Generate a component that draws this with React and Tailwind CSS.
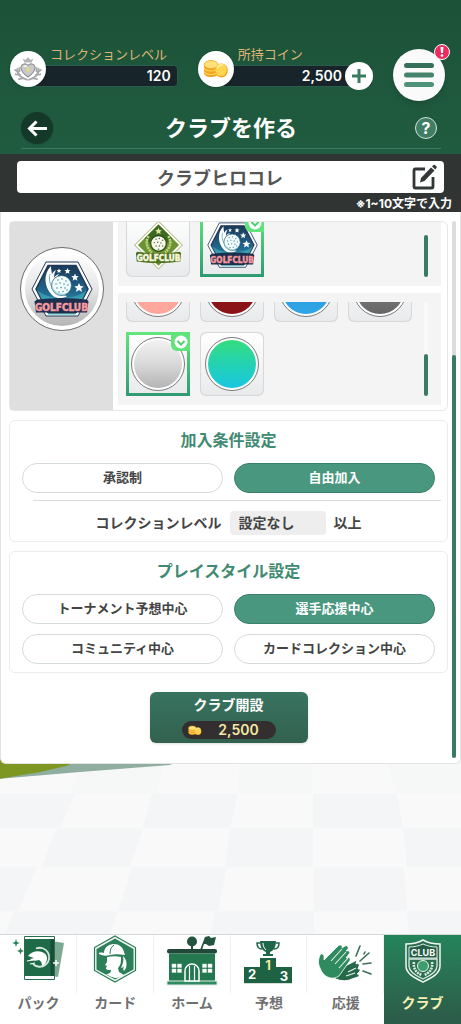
import React, { useState } from 'react';

const EMBLEMS = ['diamond', 'hexagon'];

const COLORS = [
    { name: 'ピンク', fill: 'bg-[#ffa79c]' },
    { name: 'レッド', fill: 'bg-[#8b1216]' },
    { name: 'ブルー', fill: 'bg-linear-to-b from-[#2f8fe0] to-[#2ea6e4]' },
    { name: 'グレー', fill: 'bg-linear-to-b from-[#8a8a8a] to-[#666666]' },
    { name: 'シルバー', fill: 'bg-linear-to-b from-[#f2f2f2] via-[#d9d9d9] to-[#b4b4b4]' },
    { name: 'エメラルド', fill: 'bg-linear-to-b from-[#35dc7c] to-[#1bc6e0]' },
];

const JOIN_TYPES = ['承認制', '自由加入'];
const PLAY_STYLES = ['トーナメント予想中心', '選手応援中心', 'コミュニティ中心', 'カードコレクション中心'];

const Coins = ({ className }) => (
    <svg viewBox="0 0 26 20" className={className} aria-hidden="true">
        <path d="M1 6v8c0 2.500 3 4 7 4s7-1.500 7-4V6z" fill="#f2a51d" />
        <path d="M1 9c1 2 3.500 3 7 3s6-1 7-3M1 12.500c1 2 3.500 3 7 3s6-1 7-3" fill="none" stroke="#ffd964" strokeWidth="1.200" />
        <ellipse cx="8" cy="5.500" rx="7" ry="4" fill="#ffe07a" stroke="#f0a828" strokeWidth=".8" />
        <ellipse cx="18.500" cy="11.500" rx="6.300" ry="7" fill="#f3a41e" />
        <ellipse cx="18" cy="10.800" rx="5.800" ry="6.300" fill="#ffd451" />
        <path d="M14.500 9c1-2.500 3-3.500 5-3" fill="none" stroke="#fff3b8" strokeWidth="1.300" strokeLinecap="round" />
    </svg>
);

const LevelCrest = () => (
    <svg viewBox="0 0 30 30" className="size-8" aria-hidden="true">
        <g fill="none" stroke="#a9a9ad" strokeWidth="1.800" strokeLinecap="round">
            <path d="M5 15c0 5 3 8.500 9 10M25 15c0 5-3 8.500-9 10" />
            <path d="M3 16l3 2M3.500 20l4 .5M6.500 24.500l4-1M27 16l-3 2M26.500 20l-4 .5M23.500 24.500l-4-1M7 14v3M23 14v3" />
        </g>
        <path d="M10 5l2.500 1.500L15 4l2.500 2.500L20 5l-1.500 4h-7z" fill="#b3b3b8" />
        <path d="M15 22.500c-5-3.500-7-6.500-6.500-9.500.5-3 4.500-3.800 6.500-1.300 2-2.500 6-1.700 6.500 1.300.5 3-1.500 6-6.500 9.500z" fill="#c9c9cd" stroke="#8f8f95" strokeWidth="1" />
        <path d="M11 13c.8-1.300 2-1.300 3-.3" stroke="#fff" strokeWidth="1.200" fill="none" />
        <path d="M15 12.500l1.300 3.500-1.300 3-1.300-3z" fill="#ece05e" />
    </svg>
);

const HexagonEmblem = ({ className }) => (
    <svg viewBox="0 0 62 57" className={className} aria-hidden="true">
        <defs>
            <linearGradient id="hexSky" x1="0" y1="0" x2="0" y2="1">
                <stop offset="0" stopColor="#1b3858" />
                <stop offset=".6" stopColor="#216a90" />
                <stop offset="1" stopColor="#4fb9c2" />
            </linearGradient>
        </defs>
        <path d="M15 1h32l14 27-14 27H15L1 28z" fill="#fff" stroke="#22395a" strokeWidth="1" />
        <path d="M17 4.500h28L57 28 45 51H17L5 28z" fill="url(#hexSky)" stroke="#22395a" strokeWidth="1.500" />
        <path d="M6 29c6 5 14 8 25 8s19-3 25-8l-7 14H13z" fill="#43b3bd" opacity=".6" />
        <path d="M20 5c-8 8-7 21 1 29 4 4 11 4 15 1-9-1-12-8-11-15 .5-3 1.500-5 3-7-2 .5-4 2-5 4 0-3 .5-5 2-8-2 1-3 2-4 4-.5-3-1-5-1-8z" fill="#fff" />
        <path d="M19 13c-2 7 1 13 6 18" fill="none" stroke="#5ba5bd" strokeWidth=".9" />
        <circle cx="30.500" cy="24.500" r="10" fill="#f3fbfb" stroke="#1f5878" strokeWidth=".8" />
        <path d="M21.500 20a10 10 0 0017 9.500 10 10 0 01-11 4 10 10 0 01-6-13.500z" fill="#7fcbd2" opacity=".7" />
        <g fill="#3d98ae">
            <circle cx="27" cy="19" r=".8" /><circle cx="31" cy="18" r=".8" /><circle cx="35" cy="20" r=".8" />
            <circle cx="25" cy="23" r=".8" /><circle cx="29" cy="22" r=".8" /><circle cx="33" cy="23" r=".8" /><circle cx="37" cy="24" r=".8" />
            <circle cx="26" cy="27" r=".8" /><circle cx="30" cy="26.500" r=".8" /><circle cx="34" cy="27" r=".8" />
            <circle cx="28" cy="31" r=".8" /><circle cx="32" cy="30.500" r=".8" /><circle cx="36" cy="29" r=".8" />
        </g>
        <g fill="#fff">
            <path d="M28 7.500l.7 1.600 1.700.1-1.300 1.100.4 1.700-1.500-.9-1.500.9.4-1.700-1.300-1.100 1.700-.1z" />
            <path d="M36.500 7l.9 2 2.200.2-1.700 1.400.5 2.200-1.900-1.100-1.900 1.100.5-2.200-1.700-1.400 2.200-.2z" />
            <path d="M44 12.500l1.100 2.500 2.700.2-2.100 1.800.7 2.700-2.400-1.500-2.400 1.500.7-2.700-2.100-1.800 2.700-.2z" />
            <path d="M48 22l1.400 3.100 3.300.3-2.500 2.200.8 3.300-3-1.800-3 1.800.8-3.300-2.500-2.200 3.300-.3z" />
        </g>
        <path d="M6 38.500q25-3 50 0l1.500 2-1.500 11h-10l-2 2H18l-2-2H5l-1.500-11z" fill="#1d2f4f" />
        <path d="M17 52.500h28l-1 1.500H18z" fill="#8fe0d4" />
        <text
            x="30.500"
            y="49.500"
            textAnchor="middle"
            fill="#f79a9f"
            stroke="#f79a9f"
            strokeWidth=".5"
            className="font-['DejaVu_Sans_Condensed','Liberation_Sans',sans-serif] text-[10px] font-bold"
        >
            GOLFCLUB
        </text>
    </svg>
);

const DiamondEmblem = ({ className }) => (
    <svg viewBox="0 0 62 57" className={className} aria-hidden="true">
        <path d="M31-1L60 28 31 57 2 28z" fill="#fff" stroke="#8ba53c" strokeWidth="1" />
        <path d="M31 3l25 25-25 25L6 28z" fill="#6b9430" />
        <path d="M31 3l17 17c-3 2-5 3-6 6l-11-9-11 9c-1-3-3-4-6-6z" fill="#3d6a1f" />
        <path d="M31 7l1.200 2.700 2.900.2-2.200 1.900.7 2.900-2.600-1.600-2.600 1.600.7-2.900-2.200-1.900 2.900-.2z" fill="#dbe9a4" />
        <g fill="none" stroke="#c3d685" strokeWidth="3" strokeDasharray="2.500 1">
            <path d="M19 17c-4 7-3 14 4 20M43 17c4 7 3 14-4 20" />
        </g>
        <circle cx="31" cy="26" r="9.500" fill="#f6f8ea" stroke="#2b4a17" strokeWidth="1.500" />
        <path d="M23 22a9 9 0 0015 9.500 9 9 0 01-9 2.500 9 9 0 01-6-12z" fill="#9cab86" />
        <g fill="#566b45">
            <circle cx="28" cy="21" r=".9" /><circle cx="32" cy="20" r=".9" /><circle cx="36" cy="22" r=".9" />
            <circle cx="26" cy="25" r=".9" /><circle cx="30" cy="24.500" r=".9" /><circle cx="34" cy="25.500" r=".9" />
            <circle cx="28" cy="29" r=".9" /><circle cx="32" cy="29" r=".9" /><circle cx="36" cy="29" r=".9" />
            <circle cx="31" cy="33" r=".9" />
        </g>
        <path d="M5 36q26 4 52 0l1.500 2-1 10q-27 4-53 0l-1-10z" fill="#4f7420" />
        <text
            x="31"
            y="47"
            textAnchor="middle"
            fill="#fbfbe0"
            stroke="#fbfbe0"
            strokeWidth=".5"
            className="font-['DejaVu_Sans_Condensed','Liberation_Sans',sans-serif] text-[10px] font-bold"
        >
            GOLFCLUB
        </text>
    </svg>
);

const EditIcon = () => (
    <svg viewBox="0 0 26 26" className="size-[26px]" aria-hidden="true">
        <path d="M14 5H4.500A1.500 1.500 0 003 6.500v16A1.500 1.500 0 004.500 24h16a1.500 1.500 0 001.500-1.500V13" fill="none" stroke="#333737" strokeWidth="2.800" />
        <path d="M9 18.500l1-4.500L20 3.500l3.500 3L13.500 17z" fill="#333737" />
        <path d="M21 2.500l1.500-1.500a1 1 0 011.400 0l1.600 1.500a1 1 0 010 1.400L24.300 5.500z" fill="#333737" />
    </svg>
);

const PackIcon = () => (
    <svg viewBox="0 0 52 50" className="h-[50px] w-[52px]" aria-hidden="true">
        <path d="M40 6l12 2-6 34-10-2z" fill="#7fa892" />
        <path d="M12.500 1.500h30v43h-30z" fill="#fff" stroke="#2a6e50" strokeWidth="1" />
        <path d="M13 4h29v37H13z" fill="#1f6a47" />
        <path d="M38.500 4H42v37h-3.500z" fill="#174f36" />
        <path d="M24 13.500a9.500 9.500 0 11-3 15.500" fill="none" stroke="#d5e8dc" strokeWidth="1.800" />
        <path d="M16 21c3-4 9-6 14-4 3 1 5 3 5 6 0 4-2 7-5 8 0-3-1-5-3-6-3 1-8 1-9-1l4-1c-2-1-4-1-6-2z" fill="#fff" />
        <path d="M15 26l6-1M18 29l5-1" stroke="#fff" strokeWidth="1.200" />
        <path d="M44 25v6M41 28h6" stroke="#fff" strokeWidth="1.500" />
        <path d="M4 4l1 3 3 1-3 1-1 3-1-3-3-1 3-1zM8.500 12.500l1 2.500 2.500 1-2.500 1-1 2.500-1-2.500-2.500-1 2.500-1z" fill="#2a8058" />
    </svg>
);

const CardIcon = () => (
    <svg viewBox="0 0 52 50" className="h-[50px] w-[52px]" aria-hidden="true">
        <path d="M26 1l20.500 11.500v23L26 47 5.500 35.500v-23z" fill="#f3f7f4" stroke="#2a7a56" strokeWidth="1.200" />
        <path d="M26 3.500l18.500 10.500v20.500L26 44.500 7.500 34.500V14z" fill="#2c7f59" />
        <path d="M15 18c0-5 4-9 10-9 5 0 9 3 10 8l1 3c-6-1-11-1-15 0-4 1-7 1-11-1-1-1 1-2 5-1z" fill="#fff" />
        <path d="M18 22c5-1 10-1 14 0 0 5 0 8-3 11l1 4 5 3c-3 2-6 3-9 3-3-1-6-2-9-4 3 0 5-1 5-4-3 0-5 0-5-2l1-2-2-1 2-3z" fill="#fff" />
        <path d="M34 21c4 4 4 8 3 12l-2 3c-1-1-1-3 0-5-1 1-2 2-3 2 2-4 3-8 2-12z" fill="#fff" />
        <path d="M25 10c-3 2-4 5-4 9" fill="none" stroke="#2c7f59" strokeWidth="1" />
    </svg>
);

const HomeIcon = () => (
    <svg viewBox="0 0 52 52" className="h-[52px] w-[52px]" aria-hidden="true">
        <circle cx="26" cy="6.500" r="5" fill="#22543f" />
        <path d="M25 11h2v5h-2z" fill="#22543f" />
        <path d="M34 15l5-13 4-1 2 2 5-1-2 8-5 1-3-2-2 0-2 6z" fill="#22543f" />
        <rect x="1" y="14" width="50" height="4.500" rx="2" fill="#22483a" />
        <path d="M3 18.500h46V46H3z" fill="#23784f" />
        <path d="M1 46h50v4H1z" fill="#2f8a61" stroke="#dfeae4" strokeWidth="1" />
        <path d="M19 46V36a7 7 0 0114 0v10z" fill="#23784f" stroke="#fff" strokeWidth="1.500" />
        <path d="M23.500 46V31M28.500 46V31" stroke="#fff" strokeWidth="1.200" />
        <g fill="#fff" stroke="#d5e6dc" strokeWidth=".5">
            <path d="M6 29h4v3.500H6zM11.500 29h4v3.500h-4zM6 34h4v3.500H6zM11.500 34h4v3.500h-4z" />
            <path d="M36.500 29h4v3.500h-4zM42 29h4v3.500h-4zM36.500 34h4v3.500h-4zM42 34h4v3.500h-4z" />
        </g>
    </svg>
);

const PodiumIcon = () => (
    <svg viewBox="0 0 52 50" className="h-[50px] w-[52px]" aria-hidden="true">
        <path d="M18 6h16c0 7-3 10-6 11v2h3v2H21v-2h3v-2c-3-1-6-4-6-11z" fill="#20664a" />
        <path d="M18 8h-3c0 4 2 6 5 6M34 8h3c0 4-2 6-5 6" fill="none" stroke="#20664a" strokeWidth="1.500" />
        <path d="M21 8c0 3 1 5 3 7" fill="none" stroke="#fff" strokeWidth="1" />
        <path d="M2 33h16v-9h16v9h16v16H2z" fill="#d9ddda" />
        <path d="M2 32h16v-9h16v9h16v16H2z" fill="#1e6244" />
        <g textAnchor="middle" className="font-[Inter,sans-serif] text-[13px] font-bold">
            <text x="26" y="35" fill="#f1e9a0">1</text>
            <text x="10" y="44" fill="#fff">2</text>
            <text x="42" y="46" fill="#fff">3</text>
        </g>
    </svg>
);

const ClapIcon = () => (
    <svg viewBox="0 0 54 50" className="h-[50px] w-[54px]" aria-hidden="true">
        <path d="M14 42c6 4 14 5 20 2l6-2c2-1 1-3-1-3l2-2c2-1 1-4-1-3l1-3c1-2-1-3-3-2l1-4-12 6z" fill="#27684b" stroke="#fff" strokeWidth="1" />
        <path d="M2 33c-2-4-2-8 0-13 1-2 4-1 4 1v4L20 11c2-2 5-1 4 2l3-2c2-1 4 1 3 3l-2 2c3-1 5 1 3 3l-3 4c3-2 6 1 3 4L21 41c-7 5-16 1-19-8z" fill="#2f8a5f" stroke="#fff" strokeWidth=".8" />
        <path d="M13 26l11-12M17 29l11-12M21 33l9-10M28 41l9-3M30 37l8-4" stroke="#e6f2ea" strokeWidth="1.100" />
        <g stroke="#3a6f58" strokeWidth="1.600" strokeLinecap="round">
            <path d="M38 21l4-10M42 26l9-8M45 29l8-1M45 36l8 3M46 19l1-2" />
        </g>
    </svg>
);

const ClubIcon = () => (
    <svg viewBox="0 0 52 50" className="h-[50px] w-[52px]" aria-hidden="true">
        <path d="M26 5c5 3 11 4 17 4v22c0 8-9 12-17 16-8-4-17-8-17-16V9c6 0 12-1 17-4z" fill="#2b6f50" stroke="#f4f8f5" strokeWidth="1.500" />
        <path d="M12 24h28v7c0 6-7 10-14 13-7-3-14-7-14-13z" fill="none" stroke="#dcebe2" strokeWidth="1.300" />
        <path d="M12 12c5 0 10-1 14-3 4 2 9 3 14 3v11H12z" fill="#235d44" stroke="#dcebe2" strokeWidth="1" />
        <text x="26" y="21" textAnchor="middle" fill="#fff" className="font-[Inter,sans-serif] text-[9px] font-bold">CLUB</text>
        <circle cx="26" cy="31" r="5.500" fill="#3f9c6e" stroke="#e8f3ec" strokeWidth="1" />
        <path d="M17 27c-1 6 2 11 8 13M35 27c1 6-2 11-8 13" fill="none" stroke="#dcebe2" strokeWidth="2.600" strokeDasharray="2 .8" />
    </svg>
);

const NAV_ITEMS = [
    { label: 'パック', Icon: PackIcon },
    { label: 'カード', Icon: CardIcon },
    { label: 'ホーム', Icon: HomeIcon },
    { label: '予想', Icon: PodiumIcon },
    { label: '応援', Icon: ClapIcon },
    { label: 'クラブ', Icon: ClubIcon, active: true },
];

const Tile = ({ label, selected, onClick, children }) => (
    <button
        type="button"
        aria-label={label}
        aria-pressed={selected}
        onClick={onClick}
        className={`relative size-16 shrink-0 ${selected ? 'bg-linear-to-b from-[#62e67c] to-[#2f9a72] p-[3px]' : 'rounded-md bg-[#d6d8da] p-px'}`}
    >
        <span className={`flex size-full items-center justify-center bg-linear-to-b from-white to-[#e8eaec] ${selected ? '' : 'rounded-md'}`}>
            {children}
        </span>
        {selected && (
            <span className="absolute top-0 right-0 flex size-[19px] items-center justify-center rounded-bl-md bg-[#5fe37a]">
                <svg viewBox="0 0 14 14" className="size-[14px]" aria-hidden="true">
                    <circle cx="7" cy="7" r="6.500" fill="#fff" />
                    <path d="M3.500 6L7 9.500 10.500 6" fill="none" stroke="#4fcf72" strokeWidth="2" />
                </svg>
            </span>
        )}
    </button>
);

const Pill = ({ label, selected, onClick }) => (
    <button
        type="button"
        aria-pressed={selected}
        onClick={onClick}
        className={`h-[30px] rounded-full border text-[13px] font-bold ${selected ? 'border-[#3b8069] bg-[#4a9780] text-white' : 'border-[#d5dadb] bg-white text-[#444444]'}`}
    >
        {label}
    </button>
);

const Card = ({ title, children }) => (
    <section className="rounded-md border border-[#ececec] bg-white pt-[7px]">
        <h2 className="text-center text-base leading-6 font-bold text-[#418a72]">{title}</h2>
        {children}
    </section>
);

const Floor = () => (
    <svg viewBox="0 -8 461 179" preserveAspectRatio="none" className="absolute inset-0 size-full" aria-hidden="true">
        <path d="M0-8h461v179H0z" fill="#f9f9f9" />
        <g fill="#f3f5f6">
            <path d="M85-8h80l-8 38H70zM240-8h72v38h-74zM385-8h76v38h-64z" fill="#f6f7f7" />
            <path d="M0 30h75L60 65H0zM152 30h86l-8 35h-87zM313 30h84l6 35h-90z" />
            <path d="M56 65h87l-13 39H42zM230 65h83v39h-88zM403 65h58v39h-54z" />
            <path d="M0 104h37l-19 44H0zM132 104h95l-9 44H118zM314 104h90l3 44h-93z" />
            <path d="M14 148h104l-8 23H5zM215 148h99v23H211zM407 148h54v23h-52z" />
        </g>
        <path d="M0-8h190L170 1 80 8 0 15z" fill="#8fae9f" />
        <path d="M0-8h90L66 2 40 8 0 15z" fill="#7d9722" />
    </svg>
);

const App = () => {
    const [clubName, setClubName] = useState('クラブヒロコレ');
    const [emblem, setEmblem] = useState('hexagon');
    const [color, setColor] = useState('シルバー');
    const [joinType, setJoinType] = useState('自由加入');
    const [playStyle, setPlayStyle] = useState('選手応援中心');

    return (
        <div className="flex min-h-screen flex-col bg-[#f7f7f7] font-[Inter,'Noto_Sans_CJK_JP',sans-serif] text-[#444444]">
            <header className="bg-linear-to-b from-[#1c5238] to-[#205c40] pt-[45px] pb-[5px]">
                <div className="flex items-start gap-5 pr-4 pl-[10px]">
                    <div className="flex flex-[22] items-end">
                        <div className="z-10 flex size-9 shrink-0 items-center justify-center rounded-full bg-white shadow">
                            <LevelCrest />
                        </div>
                        <div className="-ml-4 flex-1">
                            <p className="pl-5 text-[13px] leading-[18px] whitespace-nowrap text-[#dfb374]">コレクションレベル</p>
                            <p className="mt-[2px] rounded-sm border border-[#2c5a48] bg-[#17252a] pr-[6px] text-right text-sm leading-5 font-semibold text-white">120</p>
                        </div>
                    </div>
                    <div className="flex flex-[23] items-end">
                        <div className="z-10 flex size-9 shrink-0 items-center justify-center rounded-full bg-white shadow">
                            <Coins className="h-5 w-[26px]" />
                        </div>
                        <div className="-ml-4 flex-1">
                            <p className="pl-5 text-[13px] leading-[18px] whitespace-nowrap text-[#dfb374]">所持コイン</p>
                            <p className="mt-[2px] rounded-sm border border-[#2c5a48] bg-[#17252a] pr-[30px] text-right text-sm leading-5 font-semibold text-white">2,500</p>
                        </div>
                        <button type="button" aria-label="コイン追加" className="-mb-[3px] -ml-7 flex size-7 items-center justify-center rounded-full bg-white">
                            <svg viewBox="0 0 28 28" className="size-7" aria-hidden="true">
                                <path d="M14 7v14M7 14h14" stroke="#3c7a62" strokeWidth="3" />
                            </svg>
                        </button>
                    </div>
                    <button type="button" aria-label="メニュー" className="relative mt-1 flex size-[52px] shrink-0 items-center justify-center rounded-full bg-[#fafafa] shadow-md">
                        <svg viewBox="0 0 30 26" className="h-[26px] w-[30px]" aria-hidden="true">
                            <rect x="0" y="1" width="30" height="5" rx="2.500" fill="#37705a" />
                            <rect x="0" y="10.500" width="30" height="5" rx="2.500" fill="#45836b" />
                            <rect x="0" y="20" width="30" height="5" rx="2.500" fill="#4d9279" />
                        </svg>
                        <span className="absolute -top-[5px] -right-[5px] flex size-4 items-center justify-center rounded-full border border-white bg-[#ea2c60]">
                            <svg viewBox="0 0 4 10" className="h-[10px] w-1" aria-hidden="true">
                                <path d="M.5 0h3L3 6H1z" fill="#fff" />
                                <circle cx="2" cy="8.500" r="1.300" fill="#fff" />
                            </svg>
                        </span>
                    </button>
                </div>
                <div className="mr-5 ml-[21px] border-b border-[#3b7a5f] pb-1">
                    <div className="mt-[11px] grid h-8 grid-cols-[1fr_auto_1fr] items-center">
                        <button type="button" aria-label="戻る" className="flex size-8 items-center justify-center rounded-full bg-[#14382a] shadow">
                            <svg viewBox="0 0 32 32" className="size-8" aria-hidden="true">
                                <path d="M26 16.500H9M15.500 9.500L8.500 16.500l7 7" fill="none" stroke="#fff" strokeWidth="3" />
                            </svg>
                        </button>
                        <h1 className="text-[22px] leading-8 font-bold text-white">クラブを作る</h1>
                        <button type="button" className="mr-1 flex size-[22px] items-center justify-center justify-self-end rounded-full border border-[#d5e4dc] bg-[#3f7d65] text-base leading-none font-bold text-white">
                            ?
                        </button>
                    </div>
                </div>
            </header>

            <div className="bg-[#303433] pt-[7px]">
                <div className="mx-[17px] flex h-8 items-center rounded-sm bg-white pr-[7px] pl-3">
                    <input
                        id="club-name"
                        type="text"
                        maxLength={10}
                        aria-label="クラブ名"
                        value={clubName}
                        onChange={(e) => setClubName(e.target.value)}
                        className="h-8 min-w-0 flex-1 text-center text-lg font-bold text-[#555555] outline-none"
                    />
                    <label htmlFor="club-name">
                        <EditIcon />
                    </label>
                </div>
                <p className="pt-[3px] pr-[9px] text-right text-xs leading-4 font-bold text-white">※1~10文字で入力</p>
            </div>

            <main className="relative z-10 flex rounded-b-md border-x border-b border-[#e3e3e3] bg-white pt-[9px] pr-1 pb-[5px] pl-2">
                <div className="flex min-w-0 flex-1 flex-col gap-[9px] pb-[15px]">
                    <section className="flex rounded-md border border-[#e6e6e6]">
                        <div className="flex w-[103px] shrink-0 justify-center bg-[#dfdfdf] pt-[25px]">
                            <div className="flex size-[84px] items-center justify-center rounded-full border border-[#6e6e6e] bg-white p-1">
                                <div className="flex size-full items-center justify-center rounded-full bg-linear-to-b from-white via-[#e6e6e6] to-[#b5b5b5]">
                                    <HexagonEmblem className="h-[57px] w-[62px] shrink-0" />
                                </div>
                            </div>
                        </div>
                        <div className="flex min-w-0 flex-1 flex-col gap-[7px] pr-[6px] pb-[5px] pl-[5px]">
                            <div className="flex h-16 justify-between overflow-hidden bg-[#f4f4f4] pr-[13px] pb-[9px] pl-2">
                                <div className="flex items-end gap-[10px]">
                                    {EMBLEMS.map((name) => (
                                        <Tile key={name} label={name} selected={emblem === name} onClick={() => setEmblem(name)}>
                                            {name === 'hexagon' ? <HexagonEmblem className="h-[47px] w-[51px]" /> : <DiamondEmblem className="h-[47px] w-[51px] overflow-visible" />}
                                        </Tile>
                                    ))}
                                </div>
                                <div className="h-[42px] w-1 self-end rounded-full bg-[#3b7a62]" />
                            </div>
                            <div className="bg-[#f4f4f4] py-[9px] pr-[13px] pl-2">
                                <div className="flex h-[94px] justify-between overflow-hidden">
                                    <div className="grid grid-cols-4 content-end gap-[10px]">
                                        {COLORS.map((c) => (
                                            <Tile key={c.name} label={c.name} selected={color === c.name} onClick={() => setColor(c.name)}>
                                                <span className="flex size-[54px] shrink-0 rounded-full border border-[#7b7b7b] bg-white p-[2px]">
                                                    <span className={`size-full rounded-full ${c.fill}`} />
                                                </span>
                                            </Tile>
                                        ))}
                                    </div>
                                    <div className="flex w-1 flex-col justify-end rounded-full bg-[#fafafa]">
                                        <div className="h-[42px] rounded-full bg-[#3b7a62]" />
                                    </div>
                                </div>
                            </div>
                        </div>
                    </section>

                    <Card title="加入条件設定">
                        <div className="mt-[11px] grid grid-cols-2 gap-[11px] px-3">
                            {JOIN_TYPES.map((type) => (
                                <Pill key={type} label={type} selected={joinType === type} onClick={() => setJoinType(type)} />
                            ))}
                        </div>
                        <hr className="mt-[7px] mr-[6px] ml-[23px] border-[#dcdcdc]" />
                        <div className="mt-[10px] flex items-center justify-center gap-2 pb-[6px] text-sm font-bold">
                            <label htmlFor="level">コレクションレベル</label>
                            <select id="level" className="h-6 w-24 appearance-none rounded-sm bg-[#eeeeee] pl-[9px]">
                                <option>設定なし</option>
                            </select>
                            <span>以上</span>
                        </div>
                    </Card>

                    <Card title="プレイスタイル設定">
                        <div className="mt-[11px] grid grid-cols-2 gap-x-[11px] gap-y-[10px] px-3 pb-2">
                            {PLAY_STYLES.map((style) => (
                                <Pill key={style} label={style} selected={playStyle === style} onClick={() => setPlayStyle(style)} />
                            ))}
                        </div>
                    </Card>

                    <button type="button" className="mt-[10px] flex w-[158px] flex-col items-center self-center rounded-md bg-linear-to-b from-[#387461] to-[#33614f] pt-[3px] pb-1 text-white shadow">
                        <span className="text-sm leading-5 font-bold">クラブ開設</span>
                        <span className="mt-[6px] flex w-[94px] items-center rounded-full bg-[#332f30] pl-[6px] text-sm leading-[18px] font-semibold text-[#f3e9a4]">
                            <Coins className="h-[11px] w-[14px]" />
                            <span className="flex-1 text-center">2,500</span>
                        </span>
                    </button>
                </div>
                <div className="ml-1 flex w-1 flex-col justify-end rounded-full bg-[#dcdcdc]">
                    <div className="h-3/4 rounded-full bg-[#3b7a62]" />
                </div>
            </main>

            <div className="relative -mt-2 min-h-44 flex-1">
                <Floor />
            </div>

            <nav className="grid h-[90px] grid-cols-6 border-t border-[#d4d8da] bg-white">
                {NAV_ITEMS.map(({ label, Icon, active }) => (
                    <a
                        key={label}
                        href="#"
                        className={`flex flex-col items-center text-sm leading-5 font-bold ${active ? 'bg-linear-to-b from-[#23845a] to-[#2c5a49] text-[#f6f0b4]' : 'text-[#707070]'}`}
                    >
                        <span className={`flex h-[58px] w-full justify-center ${active ? '' : 'border-r border-[#f0f0f0]'}`}>
                            <Icon />
                        </span>
                        {label}
                    </a>
                ))}
            </nav>
        </div>
    );
};

export default App;
